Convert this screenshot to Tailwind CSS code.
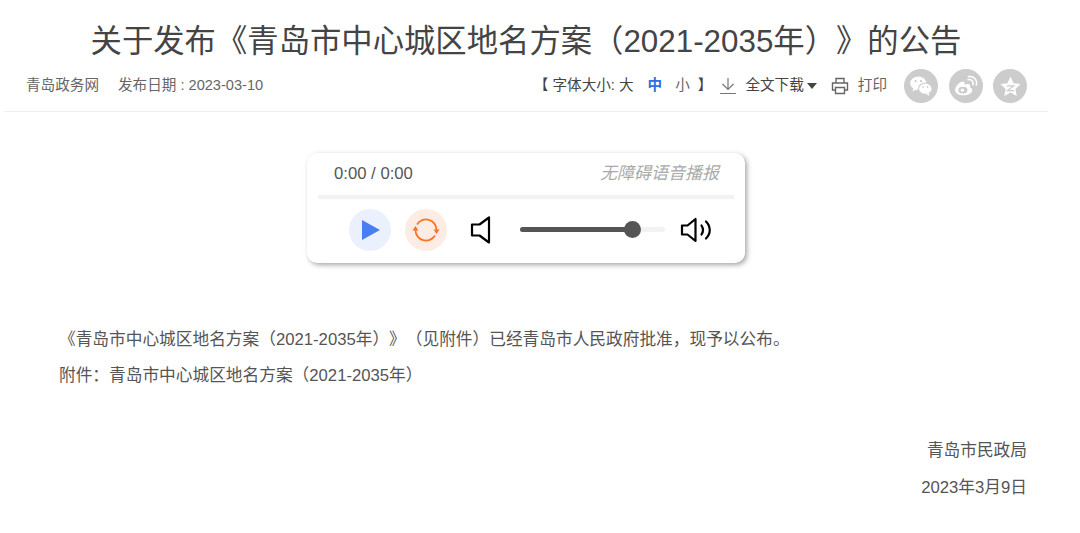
<!DOCTYPE html>
<html lang="zh">
<head>
  <meta charset="UTF-8" />
  <title>公告</title>
  <script src="https://cdn.jsdelivr.net/npm/@tailwindcss/browser@4"></script>
</head>
<body class="bg-white overflow-hidden [text-spacing-trim:space-all] font-['Liberation_Sans','Noto_Sans_CJK_SC',sans-serif]">
  <div class="w-[1080px] h-[533px] pt-[20px]">
    <!-- Title -->
    <h1 class="w-[1052px] text-center text-[31.35px] leading-[44px] text-[#444]">关于发布《青岛市中心城区地名方案（2021-2035年）》的公告</h1>

    <!-- Meta bar -->
    <div class="w-[1044px] ml-[4px] mt-[4px] h-[44px] border-b border-[#eeeeee] flex items-start justify-between pl-[22px] pr-[21px] text-[14.6px] text-[#666]">
      <div class="flex items-center h-[36px] gap-[19px]">
        <span>青岛政务网</span>
        <span>发布日期 : 2023-03-10</span>
      </div>
      <div class="flex items-center h-[36px]">
        <span class="text-[#444]">【 字体大小: 大</span>
        <span class="ml-[14px] font-bold text-[#2b6fe0]">中</span>
        <span class="ml-[13px] text-[#666]">小</span>
        <span class="ml-[8px] text-[#444]">】</span>
        <svg class="ml-[7px] w-[18px] h-[18px]" viewBox="0 0 18 18" fill="none" stroke="#777" stroke-width="1.2">
          <path d="M9 1v11M3.500 7 9 12.500 14.500 7M1 16.500h16" />
        </svg>
        <span class="ml-[8px] text-[#444]">全文下载</span>
        <span class="ml-[3px] w-0 h-0 border-x-[5px] border-x-transparent border-t-[6px] border-t-[#444]"></span>
        <svg class="ml-[14px] w-[18px] h-[18px]" viewBox="0 0 18 18" fill="none" stroke="#666" stroke-width="1.4">
          <path d="M5 6V1.500h8V6M4.500 13H1.500V6h15v7h-3M4.500 10.500h9v6h-9z" />
        </svg>
        <span class="ml-[9px]">打印</span>
        <div class="ml-[17px] flex gap-[10.5px]">
          <span class="w-[34px] h-[34px] rounded-full bg-[#cccccc] flex items-center justify-center">
            <svg class="w-[26px] h-[26px]" viewBox="0 0 24 24" fill="#fff">
              <ellipse cx="9.500" cy="9.500" rx="7.500" ry="6.300" />
              <path d="m5 14-.8 3 3.300-1.800z" />
              <ellipse cx="16" cy="14.500" rx="6.300" ry="5.200" stroke="#ccc" stroke-width="1" />
              <path d="m19 18.500 1 2.500-3.200-1.500z" />
              <circle cx="7" cy="7.500" r="1" fill="#ccc" />
              <circle cx="12" cy="7.500" r="1" fill="#ccc" />
              <circle cx="14" cy="13" r=".8" fill="#ccc" />
              <circle cx="18" cy="13" r=".8" fill="#ccc" />
            </svg>
          </span>
          <span class="w-[34px] h-[34px] rounded-full bg-[#cccccc] flex items-center justify-center">
            <svg class="w-[25px] h-[25px]" viewBox="0 0 24 24" fill="none">
              <path d="M10 20.500c-4.500 0-8-2.200-8-5.200 0-3.300 4.500-8 7.500-8 1.800 0 2 1.500 1.600 3 2.500-1 5.400-.9 5.400 1.300 0 .5-.1.800-.3 1.100 1.400.5 2.300 1.300 2.300 2.800 0 2.700-4 5-8.500 5z" fill="#fff" />
              <ellipse cx="9.500" cy="15.500" rx="4.300" ry="3.200" fill="#ccc" />
              <circle cx="9" cy="15.500" r="1.600" fill="#fff" />
              <path d="M14.500 5.500c3-.8 5.500 1.800 4.700 4.700M14.800 2.500c5-1 9 3.200 7.600 8" stroke="#fff" stroke-width="1.500" stroke-linecap="round" />
            </svg>
          </span>
          <span class="w-[34px] h-[34px] rounded-full bg-[#cccccc] flex items-center justify-center">
            <svg class="w-[25px] h-[25px]" viewBox="0 0 24 24" fill="#fff">
              <path d="m12 2.500 2.900 6.300 6.800.8-5 4.700 1.300 6.800-6-3.400-6 3.400 1.300-6.800-5-4.700 6.800-.8z" />
              <path d="M8.500 11.500h6.500l-6 4.500h6.500" fill="none" stroke="#ccc" stroke-width="1.200" />
            </svg>
          </span>
        </div>
      </div>
    </div>

    <!-- Audio player -->
    <div class="ml-[307px] mt-[41px] w-[438px] h-[110px] rounded-[10px] bg-white shadow-[2px_2px_5px_rgba(0,0,0,0.35)] px-[11px]">
      <div class="h-[42px] flex items-center justify-between pl-[16px] pr-[15px]">
        <span class="text-[16.7px] text-[#555]">0:00 / 0:00</span>
        <span class="text-[17px] italic text-[#aaa]">无障碍语音播报</span>
      </div>
      <div class="h-[4px] bg-[#f2f2f2]"></div>
      <div class="flex items-center h-[61px] pl-[31px]">
        <span class="w-[42px] h-[42px] rounded-full bg-[#ebf0fd] flex items-center justify-center">
          <svg class="ml-[2px] w-[18px] h-[20px]" viewBox="0 0 18 20" fill="#4a7ef0"><path d="M0 0 18 10 0 20z" /></svg>
        </span>
        <span class="ml-[14px] w-[42px] h-[42px] rounded-full bg-[#fdece3] flex items-center justify-center">
          <svg class="w-[28px] h-[28px]" viewBox="0 0 28 28" fill="none" stroke="#fb7424" stroke-width="1.800">
            <path d="M5 8.500A10.500 10.500 0 0 1 24.500 14" />
            <path d="M23 19.500A10.500 10.500 0 0 1 3.500 14" />
            <path d="M21.500 13.500h6l-3 4.500zM.5 14.500h6l-3-4.500z" fill="#fb7424" stroke="none" />
          </svg>
        </span>
        <svg class="ml-[22px] w-[24px] h-[28px]" viewBox="0 0 24 28" fill="none" stroke="#000" stroke-width="2.200" stroke-linejoin="round">
          <path d="M3 8.500h7.500L20 1.500v25l-9.500-7H3z" />
        </svg>
        <!-- Volume slider -->
        <div class="relative ml-[27px] w-[145px] h-[5px] rounded-full bg-[#f2f2f2]">
          <div class="h-full w-[112px] rounded-full bg-[#555]"></div>
          <span class="absolute left-[104px] top-[-6px] w-[17px] h-[17px] rounded-full bg-[#555]"></span>
        </div>
        <svg class="ml-[15px] w-[32px] h-[28px]" viewBox="0 0 32 28" fill="none" stroke="#000" stroke-width="2.200" stroke-linejoin="round" stroke-linecap="round">
          <path d="M2 9.500h5.500L15.500 3v22l-8-6.500H2z" />
          <path d="M21.500 9.500c2 3 2 6 0 9M26 5.500c5 5 5 12 0 17" />
        </svg>
      </div>
    </div>

    <!-- Body text -->
    <div class="mt-[59px] pl-[59px] text-[16.7px] text-[#555] leading-[36px]">
      <p>《青岛市中心城区地名方案（2021-2035年）》（见附件）已经青岛市人民政府批准，现予以公布。</p>
      <p>附件：青岛市中心城区地名方案（2021-2035年）</p>
    </div>

    <div class="mt-[38px] pr-[53px] text-right text-[16.7px] text-[#555] leading-[37px]">
      <p>青岛市民政局</p>
      <p>2023年3月9日</p>
    </div>
  </div>
</body>
</html>
